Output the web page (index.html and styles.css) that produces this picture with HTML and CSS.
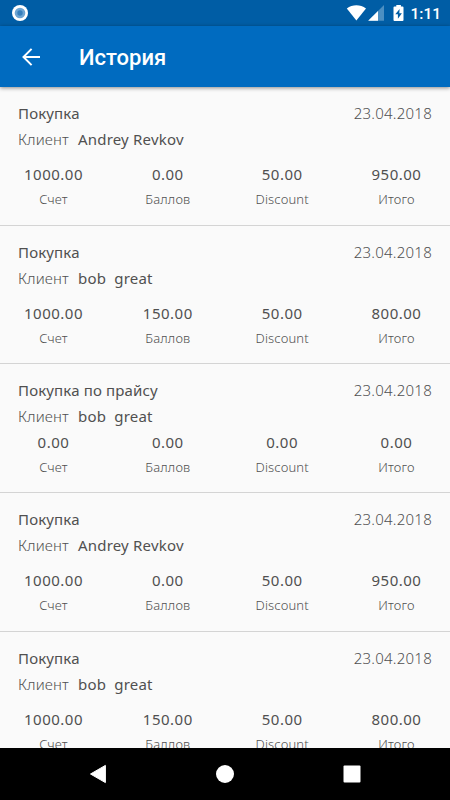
FILE: index.html
```
<!DOCTYPE html>
<html lang="ru">
<head>
    <meta charset="UTF-8">
    <meta name="viewport" content="width=device-width, initial-scale=1.0">
    <title>История</title>
    <link rel="stylesheet" href="styles.css">
</head>
<body>
    <div class="status-bar">
        <svg class="status-dot" width="16" height="16" viewBox="0 0 16 16">
            <circle cx="8" cy="8" r="8" fill="#fff"/>
            <circle cx="8" cy="8" r="5.3" fill="#6ca5d3"/>
            <circle cx="8" cy="8" r="2.7" fill="#357fbd"/>
        </svg>
        <svg class="status-icons" width="60" height="18" viewBox="0 0 60 18">
            <path d="M0.8 4.4C6.5 0.2 14.3 0.2 20 4.4L10.4 16.6z" fill="#fff"/>
            <path d="M38 1v15.8H22.2z" fill="#4c8fc2"/>
            <path d="M32 7v9.8h-9.8z" fill="#fff"/>
            <path d="M50.3 1h4.6v1.6h1.6q1 0 1 1v12.4q0 1-1 1h-8q-1 0-1-1V3.6q0-1 1-1h1.8z" fill="#fff"/>
            <path d="M53.6 5l-4.3 5.3h2.6v4.4l4-5.4h-2.6z" fill="#005da5"/>
        </svg>
        <span class="clock">1:11</span>
    </div>

    <div class="toolbar">
        <svg class="back" width="20" height="20" viewBox="0 0 20 20">
            <path d="M19 10H3M10.6 1.9L2.5 10l8.1 8.1" fill="none" stroke="#fff" stroke-width="2"/>
        </svg>
        <h1>История</h1>
    </div>

    <div class="list">
        <div class="item">
            <div class="head"><span class="title">Покупка</span><span class="date">23.04.2018</span></div>
            <div class="client"><span class="label">Клиент</span><span class="name">Andrey Revkov</span></div>
            <div class="sums">
                <div class="sum"><b>1000.00</b><span>Счет</span></div>
                <div class="sum"><b>0.00</b><span>Баллов</span></div>
                <div class="sum"><b>50.00</b><span>Discount</span></div>
                <div class="sum"><b>950.00</b><span>Итого</span></div>
            </div>
        </div>
        <div class="item">
            <div class="head"><span class="title">Покупка</span><span class="date">23.04.2018</span></div>
            <div class="client"><span class="label">Клиент</span><span class="name">bob  great</span></div>
            <div class="sums">
                <div class="sum"><b>1000.00</b><span>Счет</span></div>
                <div class="sum"><b>150.00</b><span>Баллов</span></div>
                <div class="sum"><b>50.00</b><span>Discount</span></div>
                <div class="sum"><b>800.00</b><span>Итого</span></div>
            </div>
        </div>
        <div class="item compact">
            <div class="head"><span class="title">Покупка по прайсу</span><span class="date">23.04.2018</span></div>
            <div class="client"><span class="label">Клиент</span><span class="name">bob  great</span></div>
            <div class="sums">
                <div class="sum"><b>0.00</b><span>Счет</span></div>
                <div class="sum"><b>0.00</b><span>Баллов</span></div>
                <div class="sum"><b>0.00</b><span>Discount</span></div>
                <div class="sum"><b>0.00</b><span>Итого</span></div>
            </div>
        </div>
        <div class="item">
            <div class="head"><span class="title">Покупка</span><span class="date">23.04.2018</span></div>
            <div class="client"><span class="label">Клиент</span><span class="name">Andrey Revkov</span></div>
            <div class="sums">
                <div class="sum"><b>1000.00</b><span>Счет</span></div>
                <div class="sum"><b>0.00</b><span>Баллов</span></div>
                <div class="sum"><b>50.00</b><span>Discount</span></div>
                <div class="sum"><b>950.00</b><span>Итого</span></div>
            </div>
        </div>
        <div class="item">
            <div class="head"><span class="title">Покупка</span><span class="date">23.04.2018</span></div>
            <div class="client"><span class="label">Клиент</span><span class="name">bob  great</span></div>
            <div class="sums">
                <div class="sum"><b>1000.00</b><span>Счет</span></div>
                <div class="sum"><b>150.00</b><span>Баллов</span></div>
                <div class="sum"><b>50.00</b><span>Discount</span></div>
                <div class="sum"><b>800.00</b><span>Итого</span></div>
            </div>
        </div>
    </div>

    <div class="nav-bar">
        <svg width="18" height="20" viewBox="0 0 18 20"><path d="M16.4 1.4v17.2L1.5 10z" fill="#fff" stroke="#fff" stroke-linejoin="round"/></svg>
        <svg width="18" height="18" viewBox="0 0 18 18"><circle cx="9" cy="9" r="9" fill="#fff"/></svg>
        <svg width="18" height="18" viewBox="0 0 18 18"><rect x="0.5" y="0.5" width="17" height="17" rx="1" fill="#fff"/></svg>
    </div>
</body>
</html>
```
FILE: styles.css
```
* {
    box-sizing: border-box;
}

body {
    margin: 0;
    height: 800px;
    display: flex;
    flex-direction: column;
    overflow: hidden;
    background: #fafafa;
    color: #505050;
    font-family: "Noto Sans", sans-serif;
}

.status-bar {
    flex: none;
    height: 26px;
    padding: 0 9px 0 12px;
    display: flex;
    align-items: center;
    background: #005da5;
}

.status-icons {
    margin-left: auto;
}

.clock {
    margin-left: 4px;
    margin-top: 1px;
    font: 500 15.5px/20px Roboto, sans-serif;
    color: #fff;
}

.toolbar {
    flex: none;
    height: 61px;
    padding-left: 21px;
    display: flex;
    align-items: center;
    background: #006bc0;
    box-shadow: 0 1px 4px rgba(0, 0, 0, 0.45);
    z-index: 1;
}

.toolbar h1 {
    margin: 2px 0 0 38px;
    font: 500 22px/28px Roboto, sans-serif;
    color: #fff;
}

.list {
    flex: 1;
    min-height: 0;
    padding-top: 0.4px;
    overflow: hidden;
}

.item {
    height: 138.3px;
    padding: 13px 18px 0;
    border-bottom: 1px solid #d4d4d4;
}

.head,
.client {
    display: flex;
    height: 26px;
    line-height: 26px;
    font-size: 15px;
    letter-spacing: 0.15px;
}

.head {
    justify-content: space-between;
}

.date,
.label {
    font-weight: 300;
}

.date {
    letter-spacing: 0.25px;
}

.name {
    margin-left: 9px;
    letter-spacing: 0.2px;
    white-space: pre;
}

.sums {
    display: flex;
    justify-content: space-between;
    margin-top: 10px;
}

.sum {
    width: 71px;
    display: flex;
    flex-direction: column;
    align-items: center;
    line-height: 25px;
}

.sum b {
    font-size: 15px;
    font-weight: 400;
    letter-spacing: 0.5px;
}

.sum span {
    font-size: 13px;
    font-weight: 300;
    letter-spacing: 0.15px;
}

.compact {
    height: 129.4px;
}

.compact .sums {
    margin-top: 1px;
}

.nav-bar {
    flex: none;
    height: 52px;
    padding: 0 89px;
    display: flex;
    justify-content: space-between;
    align-items: center;
    background: #000;
}
```
